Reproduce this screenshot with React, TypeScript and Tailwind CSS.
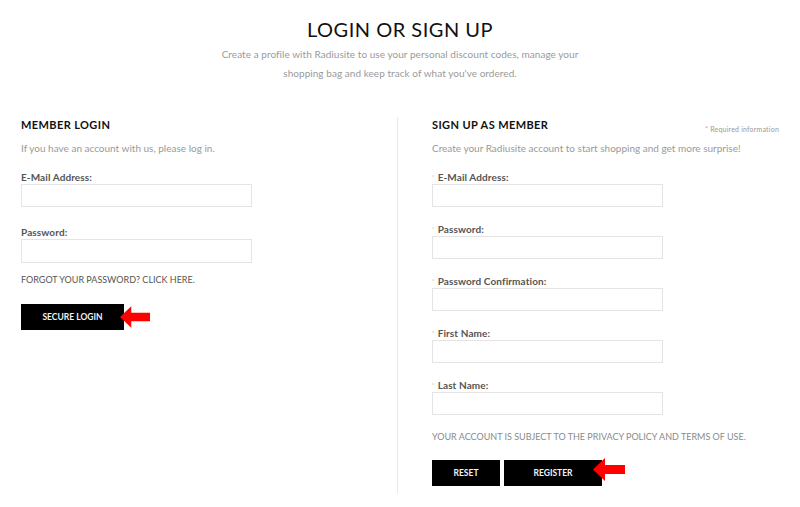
import React from "react";

function Arrow({ className }: { className: string }) {
  return (
    <svg className={className} viewBox="0 0 32 23" width="32" height="23" aria-hidden="true">
      <polygon points="0,11.5 12,0 12,7 32,7 32,16 12,16 12,23" fill="#ff0000" />
    </svg>
  );
}

function Field({ label, required, last }: { label: string; required?: boolean; last?: boolean }) {
  return (
    <div className={last ? "" : "mb-[15px]"}>
      <label className="block text-[10px] leading-[14px] font-bold text-[#555] tracking-[0.1px]">
        {required && <span className="text-[6px] align-top text-[#d99] mr-[3px] font-normal">*</span>}
        {label}
      </label>
      <div className="h-[23px] w-[231px] border border-[#e4e4e4] bg-white" />
    </div>
  );
}

export default function App() {
  return (
    <div className="min-h-[507px] w-full bg-white" style={{ fontFamily: "Lato, 'Open Sans', sans-serif" }}>
      <header className="pt-[17px] text-center">
        <h1 className="text-[20px] leading-[24px] text-[#111] tracking-[0.5px]">LOGIN OR SIGN UP</h1>
        <p className="mt-[4px] text-[10px] leading-[19px] text-[#9a9a9a] tracking-[0.05px]">
          Create a profile with Radiusite to use your personal discount codes, manage your
          <br />
          shopping bag and keep track of what you've ordered.
        </p>
      </header>

      <div className="mx-[21px] mt-[34px] grid grid-cols-[376px_1fr]">
        <section>
          <h2 className="text-[11px] leading-[16px] font-bold text-[#111] tracking-[0.4px]">MEMBER LOGIN</h2>
          <p className="mt-[7px] text-[10px] leading-[16px] text-[#9a9a9a]">
            If you have an account with us, please log in.
          </p>
          <div className="mt-[14px]">
            <label className="block text-[10px] leading-[14px] font-bold text-[#555] tracking-[0.1px]">
              E-Mail Address:
            </label>
            <div className="h-[23px] w-[231px] border border-[#e4e4e4]" />
          </div>
          <div className="mt-[18px]">
            <label className="block text-[10px] leading-[14px] font-bold text-[#555] tracking-[0.1px]">
              Password:
            </label>
            <div className="h-[24px] w-[231px] border border-[#e4e4e4]" />
          </div>
          <p className="mt-[10px] text-[9px] leading-[14px] text-[#555]">
            FORGOT YOUR PASSWORD? CLICK HERE.
          </p>
          <div className="relative mt-[17px] w-[103px]">
            <button className="flex h-[26px] w-[103px] items-center justify-center bg-black text-[8.5px] font-bold text-[#eef2f6]">
              SECURE LOGIN
            </button>
            <Arrow className="absolute left-[99px] top-[2px] h-[22px] w-[30px]" />
          </div>
        </section>

        <section className="border-l border-[#e8e8e8] pl-[34px] pb-[7px]">
          <div className="flex items-start justify-between">
            <h2 className="text-[11px] leading-[16px] font-bold text-[#111] tracking-[0.4px]">SIGN UP AS MEMBER</h2>
            <span className="mt-[7px] text-[7px] leading-[10px] text-[#999] tracking-[0.2px]">
              <span className="text-[#d99]">*</span> Required information
            </span>
          </div>
          <p className="mt-[6px] text-[10px] leading-[16px] text-[#9a9a9a]">
            Create your Radiusite account to start shopping and get more surprise!
          </p>
          <div className="mt-[14px]">
            <Field label="E-Mail Address:" required />
            <Field label="Password:" required />
            <Field label="Password Confirmation:" required />
            <Field label="First Name:" required />
            <Field label="Last Name:" required last />
          </div>
          <p className="mt-[15px] text-[9px] leading-[14px] text-[#8a8a8a]">
            YOUR ACCOUNT IS SUBJECT TO THE PRIVACY POLICY AND TERMS OF USE.
          </p>
          <div className="mt-[16px] flex gap-[4px]">
            <button className="flex h-[26px] w-[68px] items-center justify-center bg-black text-[8.5px] font-bold text-[#eef2f6]">
              RESET
            </button>
            <div className="relative">
              <button className="flex h-[26px] w-[98px] items-center justify-center bg-black text-[8.5px] font-bold text-[#eef2f6]">
                REGISTER
              </button>
              <Arrow className="absolute left-[89px] top-[-2px] h-[23px] w-[32px]" />
            </div>
          </div>
        </section>
      </div>
    </div>
  );
}
